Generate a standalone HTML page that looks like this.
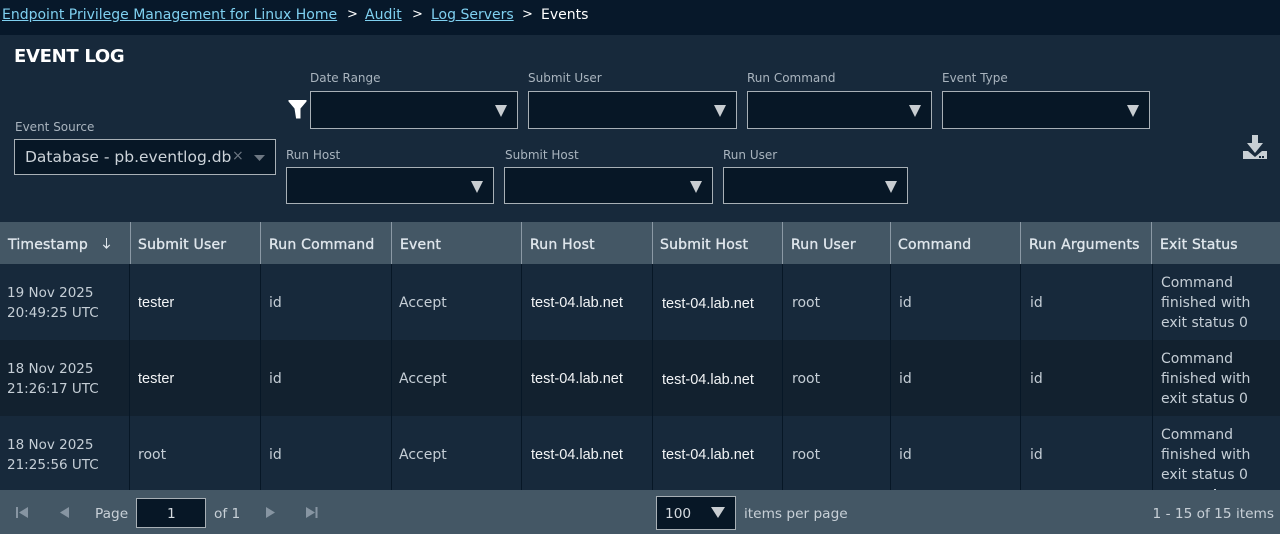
<!DOCTYPE html>
<html><head><meta charset="utf-8"><style>
html,body{margin:0;padding:0;width:1280px;height:534px;overflow:hidden;background:#17293b}
body{position:relative;font-family:"DejaVu Sans","Liberation Sans",sans-serif;font-size:14px;color:#c5ced6}
.a{position:absolute;white-space:nowrap}
.b{position:absolute}
.l{position:absolute;white-space:nowrap;font-size:12px;line-height:16px;color:#a9b4be}
.s{position:absolute;box-sizing:border-box;background:#071726;border:1px solid #a8b0b6}
.s svg{position:absolute;top:12px;right:9px}
.h{position:absolute;top:236px;line-height:18px;font-weight:400;color:#dfe6ec;font-size:14px;letter-spacing:.2px;-webkit-text-stroke:.35px #dfe6ec;white-space:nowrap}
.t{position:absolute;white-space:nowrap;line-height:20px;color:#c5ced6;font-size:14px}
.d{font-size:13.5px}
.w{position:absolute;white-space:nowrap;line-height:20px;color:#f2f4f6;font-family:"Liberation Sans",sans-serif;font-size:14.5px}
.v{position:absolute;width:1px;top:264px;height:226px;background:#071726}
.hv{position:absolute;width:1px;top:222px;height:42px;background:#8b99a5}
.f{font-size:13.7px}
a{color:#7fd0f0;text-decoration:underline}
</style></head><body>
<div class="b" style="left:0;top:0;width:1280px;height:35px;background:#07182a"></div>
<div class="a" style="left:2px;top:6px;line-height:18px;color:#fff"><a>Endpoint Privilege Management for Linux Home</a></div>
<div class="a" style="left:347px;top:6px;line-height:18px;font-size:13px;color:#fff">&gt;</div>
<div class="a" style="left:365px;top:6px;line-height:18px"><a>Audit</a></div>
<div class="a" style="left:412px;top:6px;line-height:18px;font-size:13px;color:#fff">&gt;</div>
<div class="a" style="left:431px;top:6px;line-height:18px"><a>Log Servers</a></div>
<div class="a" style="left:522px;top:6px;line-height:18px;font-size:13px;color:#fff">&gt;</div>
<div class="a" style="left:541px;top:6px;line-height:18px;color:#fff">Events</div>

<div class="a" style="left:14px;top:45px;line-height:24px;font-size:18px;font-weight:700;color:#fff;letter-spacing:-.3px">EVENT LOG</div>

<svg class="b" style="left:288px;top:99px" width="20" height="20" viewBox="0 0 20 20"><path d="M0.5 1H18.5V2.5L12.5 9.5V19.5H8V19L6.5 9.5L0.5 2.5Z" fill="#fff"/></svg>

<div class="l" style="left:310px;top:70px">Date Range</div>
<div class="s" style="left:310px;top:91px;width:208px;height:38px"><svg width="14" height="14"><path d="M1 1H13L7 13Z" fill="#c8cdd1"/></svg></div>
<div class="l" style="left:528px;top:70px">Submit User</div>
<div class="s" style="left:528px;top:91px;width:209px;height:38px"><svg width="14" height="14"><path d="M1 1H13L7 13Z" fill="#c8cdd1"/></svg></div>
<div class="l" style="left:747px;top:70px">Run Command</div>
<div class="s" style="left:747px;top:91px;width:185px;height:38px"><svg width="14" height="14"><path d="M1 1H13L7 13Z" fill="#c8cdd1"/></svg></div>
<div class="l" style="left:942px;top:70px">Event Type</div>
<div class="s" style="left:942px;top:91px;width:208px;height:38px"><svg width="14" height="14"><path d="M1 1H13L7 13Z" fill="#c8cdd1"/></svg></div>

<div class="l" style="left:15px;top:119px">Event Source</div>
<div class="s" style="left:14px;top:139px;width:262px;height:36px"></div>
<div class="a" style="left:25px;top:147px;line-height:20px;font-size:15.5px;color:#ccd3d9">Database - pb.eventlog.db</div>
<div class="a" style="left:232px;top:148px;line-height:16px;font-size:14px;color:#6d7782">×</div>
<svg class="b" style="left:254px;top:155px" width="11" height="6"><path d="M0 0H11L5.5 6Z" fill="#6d7782"/></svg>

<div class="l" style="left:286px;top:147px">Run Host</div>
<div class="s" style="left:286px;top:167px;width:208px;height:37px"><svg width="14" height="14"><path d="M1 1H13L7 13Z" fill="#c8cdd1"/></svg></div>
<div class="l" style="left:505px;top:147px">Submit Host</div>
<div class="s" style="left:504px;top:167px;width:209px;height:37px"><svg width="14" height="14"><path d="M1 1H13L7 13Z" fill="#c8cdd1"/></svg></div>
<div class="l" style="left:723px;top:147px">Run User</div>
<div class="s" style="left:723px;top:167px;width:185px;height:37px"><svg width="14" height="14"><path d="M1 1H13L7 13Z" fill="#c8cdd1"/></svg></div>

<svg class="b" style="left:1243px;top:135px" width="24" height="24" viewBox="0 0 24 24"><path d="M9 0H15V8H20L12 18L4 8H9Z" fill="#c8cfd4"/><path d="M0 16H5L12 22L19 16H24V24H0Z" fill="#c8cfd4"/><rect x="16" y="21" width="2" height="2" fill="#17293b"/><rect x="19" y="21" width="2" height="2" fill="#17293b"/></svg>

<!-- table -->
<div class="b" style="left:0;top:222px;width:1280px;height:42px;background:#445765"></div>
<div class="b" style="left:0;top:264px;width:1280px;height:76px;background:#17293b"></div>
<div class="b" style="left:0;top:340px;width:1280px;height:76px;background:#12212f"></div>
<div class="b" style="left:0;top:416px;width:1280px;height:74px;background:#17293b"></div>

<div class="hv" style="left:130px"></div><div class="hv" style="left:260px"></div><div class="hv" style="left:391px"></div><div class="hv" style="left:521px"></div><div class="hv" style="left:652px"></div><div class="hv" style="left:782px"></div><div class="hv" style="left:890px"></div><div class="hv" style="left:1020px"></div><div class="hv" style="left:1151px"></div>
<div class="v" style="left:129px"></div><div class="v" style="left:260px"></div><div class="v" style="left:391px"></div><div class="v" style="left:521px"></div><div class="v" style="left:652px"></div><div class="v" style="left:782px"></div><div class="v" style="left:890px"></div><div class="v" style="left:1020px"></div><div class="v" style="left:1152px"></div>

<div class="h" style="left:8px">Timestamp</div>
<svg class="b" style="left:102px;top:238px" width="9" height="12"><path d="M4 0H5V8.5L7.5 6.5L8.2 7.2L4.5 11L.8 7.2L1.5 6.5L4 8.5Z" fill="#dfe6ec"/></svg>
<div class="h" style="left:138px">Submit User</div>
<div class="h" style="left:269px">Run Command</div>
<div class="h" style="left:400px">Event</div>
<div class="h" style="left:530px">Run Host</div>
<div class="h" style="left:660px">Submit Host</div>
<div class="h" style="left:791px">Run User</div>
<div class="h" style="left:898px">Command</div>
<div class="h" style="left:1029px">Run Arguments</div>
<div class="h" style="left:1160px">Exit Status</div>

<!-- row 1 -->
<div class="t d" style="left:7px;top:283px">19 Nov 2025<br>20:49:25 UTC</div>
<div class="w" style="left:138px;top:293px">tester</div>
<div class="t" style="left:269px;top:293px">id</div>
<div class="t" style="left:399px;top:293px">Accept</div>
<div class="w" style="left:531px;top:293px">test-04.lab.net</div>
<div class="w" style="left:662px;top:294px">test-04.lab.net</div>
<div class="t" style="left:792px;top:293px">root</div>
<div class="t" style="left:899px;top:293px">id</div>
<div class="t" style="left:1030px;top:293px">id</div>
<div class="t" style="left:1161px;top:273px">Command<br>finished with<br>exit status 0</div>
<!-- row 2 -->
<div class="t d" style="left:7px;top:359px">18 Nov 2025<br>21:26:17 UTC</div>
<div class="w" style="left:138px;top:369px">tester</div>
<div class="t" style="left:269px;top:369px">id</div>
<div class="t" style="left:399px;top:369px">Accept</div>
<div class="w" style="left:531px;top:369px">test-04.lab.net</div>
<div class="w" style="left:662px;top:370px">test-04.lab.net</div>
<div class="t" style="left:792px;top:369px">root</div>
<div class="t" style="left:899px;top:369px">id</div>
<div class="t" style="left:1030px;top:369px">id</div>
<div class="t" style="left:1161px;top:349px">Command<br>finished with<br>exit status 0</div>
<!-- row 3 -->
<div class="t d" style="left:7px;top:435px">18 Nov 2025<br>21:25:56 UTC</div>
<div class="t" style="left:138px;top:445px">root</div>
<div class="t" style="left:269px;top:445px">id</div>
<div class="t" style="left:399px;top:445px">Accept</div>
<div class="w" style="left:531px;top:445px">test-04.lab.net</div>
<div class="w" style="left:662px;top:445px">test-04.lab.net</div>
<div class="t" style="left:792px;top:445px">root</div>
<div class="t" style="left:899px;top:445px">id</div>
<div class="t" style="left:1030px;top:445px">id</div>
<div class="t" style="left:1161px;top:425px">Command<br>finished with<br>exit status 0</div>
<div class="b" style="left:1214px;top:489px;width:2px;height:1px;background:#c5ced6"></div>

<!-- footer -->
<div class="b" style="left:0;top:490px;width:1280px;height:44px;background:#445765"></div>
<svg class="b" style="left:16px;top:506px" width="13" height="13"><rect x="0" y="1" width="2" height="11" fill="#8795a2"/><path d="M12 1V12L3 6.5Z" fill="#8795a2"/></svg>
<svg class="b" style="left:59px;top:506px" width="11" height="13"><path d="M10 1V12L1 6.5Z" fill="#8795a2"/></svg>
<div class="a f" style="left:95px;top:504px;line-height:20px;color:#c8d0d7">Page</div>
<div class="s" style="left:136px;top:498px;width:70px;height:30px"></div>
<div class="a f" style="left:167px;top:504px;line-height:20px;color:#d5dbe0">1</div>
<div class="a f" style="left:214px;top:504px;line-height:20px;color:#c8d0d7">of 1</div>
<svg class="b" style="left:265px;top:506px" width="11" height="13"><path d="M1 1V12L10 6.5Z" fill="#8795a2"/></svg>
<svg class="b" style="left:305px;top:506px" width="13" height="13"><path d="M1 1V12L10 6.5Z" fill="#8795a2"/><rect x="10.500" y="1" width="2" height="11" fill="#8795a2"/></svg>

<div class="s" style="left:656px;top:496px;width:80px;height:34px"></div>
<div class="a f" style="left:665px;top:504px;line-height:20px;color:#d5dbe0">100</div>
<svg class="b" style="left:711px;top:507px" width="14" height="11"><path d="M0 0H14L7 11Z" fill="#c8cdd1"/></svg>
<div class="a f" style="left:744px;top:504px;line-height:20px;color:#c8d0d7">items per page</div>
<div class="a f" style="right:6px;top:504px;line-height:20px;color:#c8d0d7">1 - 15 of 15 items</div>
</body></html>
